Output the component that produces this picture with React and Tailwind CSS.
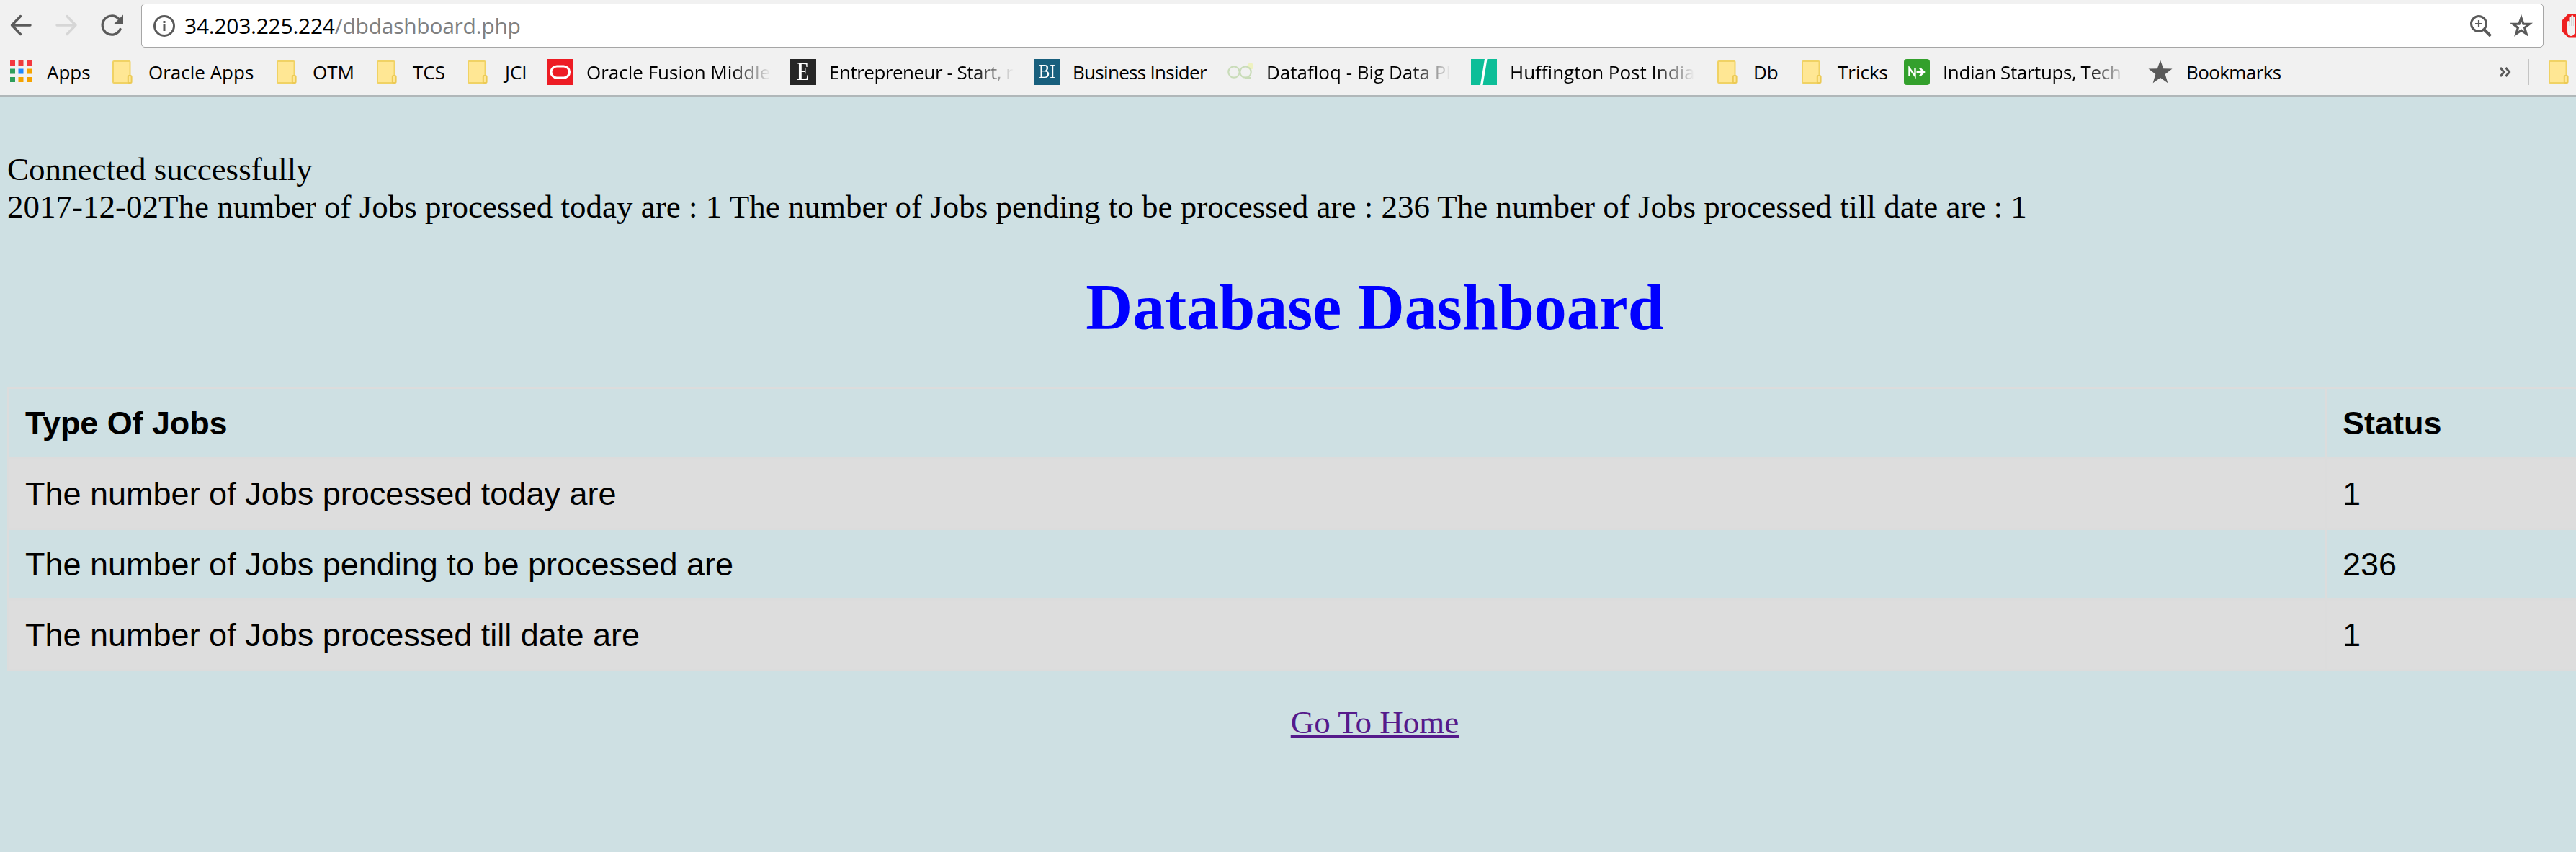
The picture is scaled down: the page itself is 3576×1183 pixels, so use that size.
import React from "react";

const INK = "#5a5a5a";

function Folder() {
  return (
    <svg width="36" height="36" viewBox="0 0 36 36">
      <rect x="5" y="3" width="23.500" height="30" rx="1" fill="#ffe794" stroke="#f0d264" strokeWidth="2" />
      <rect x="25.800" y="23" width="4.800" height="10" rx="1.500" fill="#ffe794" stroke="#ecca55" strokeWidth="2" />
    </svg>
  );
}

function AppsGrid() {
  const colors = ["#f4383f", "#ee3b3b", "#f4383f", "#2f9e5b", "#1e88ff", "#f5a300", "#2f9e5b", "#f5a300", "#f5a300"];
  return (
    <svg width="36" height="36" viewBox="0 0 36 36">
      {colors.map((c, i) => (
        <rect key={i} x={3 + (i % 3) * 11.5} y={2 + Math.floor(i / 3) * 11.5} width="7" height="7" fill={c} />
      ))}
    </svg>
  );
}

function Oracle() {
  return (
    <svg width="36" height="36" viewBox="0 0 36 36">
      <rect width="36" height="36" fill="#ed1c24" />
      <rect x="5" y="10" width="25.500" height="16" rx="8" fill="none" stroke="#fff" strokeWidth="3.200" />
    </svg>
  );
}

function Entrepreneur() {
  return (
    <span className="flex h-9 w-9 items-center justify-center bg-[#262626] font-['Liberation_Serif',serif] text-[35px] leading-none font-bold text-white">
      <span className="scale-x-70">E</span>
    </span>
  );
}

function Insider() {
  return (
    <span className="flex h-9 w-9 items-center justify-center bg-[#185f7d] font-['Liberation_Serif',serif] text-[27px] leading-none text-white">
      <span className="scale-x-85">BI</span>
    </span>
  );
}

function Datafloq() {
  return (
    <svg width="36" height="36" viewBox="0 0 36 36">
      <circle cx="32" cy="10" r="4.500" fill="#eef3b4" opacity=".8" />
      <g fill="none" stroke="#c9dcb9" strokeWidth="2.200">
        <circle cx="9" cy="18" r="7.700" />
        <circle cx="25" cy="18" r="7.700" />
        <path d="M24 26h9" />
      </g>
    </svg>
  );
}

function Huffington() {
  return (
    <svg width="36" height="36" viewBox="0 0 36 36">
      <rect width="36" height="36" fill="#0dbe98" />
      <path d="M19 0h3.500L16.500 36H13z" fill="#fff" />
    </svg>
  );
}

function NextBig() {
  return (
    <svg width="36" height="36" viewBox="0 0 36 36">
      <rect width="36" height="36" rx="4" fill="#33a02c" />
      <g fill="none" stroke="#fff" strokeWidth="2.400">
        <path d="M7.500 24V12.500L15.500 23.500V12" />
        <path d="M17.500 18h10M22 12.500l6 5.500-6 5.500" />
      </g>
    </svg>
  );
}

const STAR = "M18 1.500l4.200 11.800 12.300.2-9.800 7.500 3.600 12.200L18 26l-10.300 7.200 3.600-12.200L1.500 13.500l12.300-.2z";

function StarFilled() {
  return (
    <svg width="36" height="36" viewBox="0 0 36 36">
      <path d={STAR} fill={INK} />
    </svg>
  );
}

const bookmarks = [
  { icon: AppsGrid, label: "Apps", box: "w-[141px]" },
  { icon: Folder, label: "Oracle Apps", box: "w-[228px]" },
  { icon: Folder, label: "OTM", box: "w-[139px]" },
  { icon: Folder, label: "TCS", box: "w-[126px]" },
  { icon: Folder, label: "JCI", box: "w-[115px] [&>span:last-child]:pl-[2px]" },
  { icon: Oracle, label: "Oracle Fusion Middlew", box: "w-[337px]", fade: true },
  { icon: Entrepreneur, label: "Entrepreneur - Start, r", box: "w-[338px] tracking-[-0.5px]", fade: true },
  { icon: Insider, label: "Business Insider", box: "w-[269px] tracking-[-0.7px]" },
  { icon: Datafloq, label: "Datafloq - Big Data Pl", box: "w-[338px]", fade: true },
  { icon: Huffington, label: "Huffington Post India", box: "w-[338px]", fade: true },
  { icon: Folder, label: "Db", box: "w-[117px]" },
  { icon: Folder, label: "Tricks", box: "w-[146px]" },
  { icon: NextBig, label: "Indian Startups, Tech", box: "w-[338px] tracking-[-0.4px]", fade: true },
  { icon: StarFilled, label: "Bookmarks", box: "w-[240px] tracking-[-0.6px]" },
];

function Bookmark({ icon: Icon, label, box, fade }) {
  return (
    <div className={`flex h-9 shrink-0 items-center gap-[18px] ${box}`}>
      <span className="h-9 w-9 shrink-0 tracking-normal">
        <Icon />
      </span>
      <span
        className={
          fade
            ? "w-[256px] overflow-hidden whitespace-nowrap [mask-image:linear-gradient(to_right,#000_78%,transparent)]"
            : "whitespace-nowrap"
        }
      >
        {label}
      </span>
    </div>
  );
}

function Toolbar() {
  return (
    <div className="flex h-[67px] items-start overflow-hidden pt-[5px]">
      <div className="flex h-[61px] w-[196px] shrink-0 items-center pl-[10px]">
        <svg width="180" height="40" viewBox="10 16 180 40" fill="none">
          <g strokeWidth="3.400" strokeLinecap="round" strokeLinejoin="round">
            <path d="M42 35H17M28.500 22.500L16.500 35 28.500 47.500" stroke={INK} />
            <path d="M79 35h25M93 22.500L105 35 93 47.500" stroke="#d6d6d6" />
            <path d="M164.500 26A13 13 0 1 0 167 40.500" stroke={INK} />
          </g>
          <path d="M171 20.500v12.500h-12.500z" fill={INK} />
        </svg>
      </div>
      <div className="flex h-[61px] w-[3335px] shrink-0 items-center rounded-[5px] border border-[#a6a6a6] bg-white pr-[13px] pl-[14px]">
        <svg width="34" height="34" viewBox="0 0 34 34" fill="none" stroke={INK}>
          <circle cx="17" cy="17" r="13.500" strokeWidth="3" />
          <path d="M17 15v9M17 10v3" strokeWidth="3" />
        </svg>
        <span className="ml-[11px] text-[30px] leading-none tracking-[-0.26px] text-black">
          34.203.225.224<span className="text-[#808080]">/dbdashboard.php</span>
        </span>
        <div className="ml-auto flex items-center gap-[23px]">
          <svg width="32" height="34" viewBox="0 0 32 34" fill="none" stroke={INK}>
            <circle cx="13" cy="14" r="10.500" strokeWidth="3" />
            <path d="M13 9v10M8 14h10" strokeWidth="2.200" />
            <path d="M20 21.500l9.500 9.500" strokeWidth="4" />
          </svg>
          <svg width="34" height="36" viewBox="0 0 36 36">
            <path d="M18 6l3.100 9 9 .1-7.200 5.600 2.600 8.900L18 24.500l-7.500 5.100 2.600-8.900-7.200-5.600 9-.1z" fill="none" stroke={INK} strokeWidth="3.400" />
          </svg>
        </div>
      </div>
      <svg className="mt-[13px] ml-[24px] shrink-0" width="34" height="36" viewBox="0 0 34 36">
        <path d="M10.500 1h14l9.500 10v14l-9.500 9.500h-14L1 25V11z" fill="#ee2020" />
        <path d="M9 12q1.300-2 2.600 0V6q1.400-2 2.800 0V4q1.400-2 2.800 0v2q1.400-2 2.800 0v20q-2 6-6 6-5 0-5-7z" fill="#f1f1f1" />
        <path d="M12 7v11M14.600 6v12M17.400 6v12" stroke="#c9c9c9" strokeWidth=".7" />
      </svg>
    </div>
  );
}

function BookmarkBar() {
  return (
    <div className="flex h-[67px] items-center overflow-hidden border-b-2 border-[#b0b7b9] pl-[11px] text-[26px] leading-9 text-black">
      {bookmarks.map((b) => (
        <Bookmark key={b.label} {...b} />
      ))}
      <svg className="ml-[248px] shrink-0" width="18" height="20" viewBox="0 0 18 20" fill="none" stroke={INK} strokeWidth="3">
        <path d="M2 4l5 6-5 6M9.500 4l5 6-5 6" />
      </svg>
      <span className="ml-[23px] h-9 w-px shrink-0 bg-[#c4c4c4]" />
      <span className="ml-[23px] shrink-0">
        <Folder />
      </span>
    </div>
  );
}

const rows = [
  ["The number of Jobs processed today are", "1"],
  ["The number of Jobs pending to be processed are", "236"],
  ["The number of Jobs processed till date are", "1"],
];

const cell = "border-[3px] border-[#dcdcdc] px-[22px] py-[21.5px] text-left";

export default function App() {
  return (
    <div className="flex h-[1183px] w-[3576px] flex-col overflow-hidden bg-[#cee0e3]">
      <header className="h-[134px] shrink-0 bg-[#f1f1f1] font-['Open_Sans',sans-serif]">
        <Toolbar />
        <BookmarkBar />
      </header>
      <main className="ml-[10px] w-[3797px] pt-[75px] font-['Liberation_Serif',serif] text-[45px] leading-[52px] text-black">
        <p>Connected successfully</p>
        <p>
          2017-12-02The number of Jobs processed today are : 1 The number of Jobs pending to be processed are : 236 The
          number of Jobs processed till date are : 1
        </p>
        <h1 className="mt-[62px] text-center text-[90px] leading-[104px] font-bold text-[#0000ff]">Database Dashboard</h1>
        <table className="mt-[58px] w-full table-fixed border-collapse font-['Liberation_Sans',sans-serif]">
          <thead>
            <tr>
              <th className={`${cell} w-[3217px] font-bold tracking-[-0.1px]`}>Type Of Jobs</th>
              <th className={`${cell} font-bold`}>Status</th>
            </tr>
          </thead>
          <tbody>
            {rows.map(([label, value]) => (
              <tr key={label} className="odd:bg-[#dddddd]">
                <td className={cell}>{label}</td>
                <td className={cell}>{value}</td>
              </tr>
            ))}
          </tbody>
        </table>
        <p className="mt-[45px] text-center">
          <a className="text-[#551a8b] underline decoration-4 underline-offset-[3px] [text-decoration-skip-ink:none]">Go To Home</a>
        </p>
      </main>
    </div>
  );
}
